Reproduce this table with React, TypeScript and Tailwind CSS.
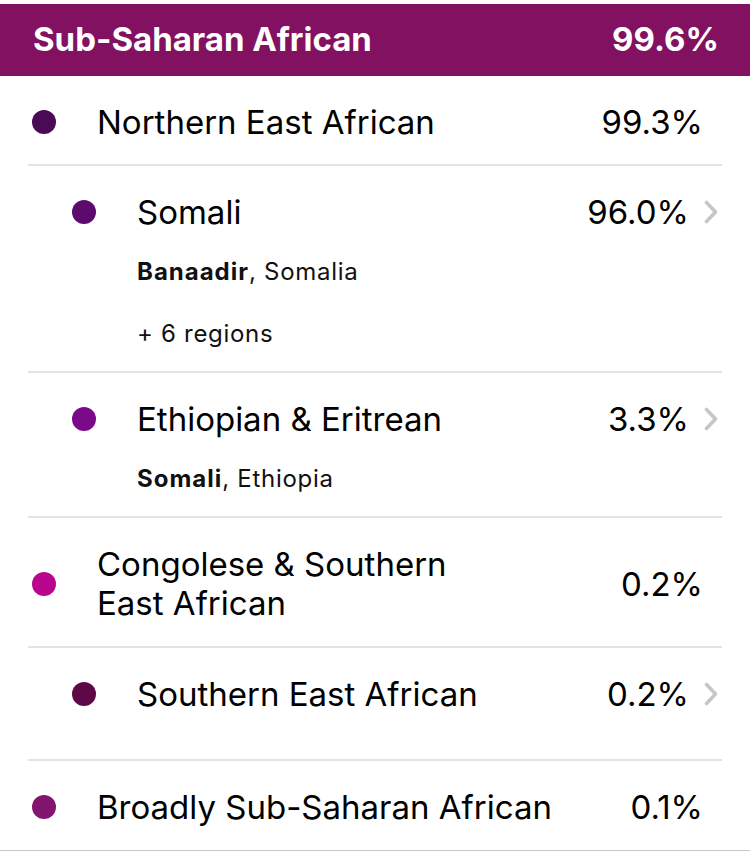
import React from "react";

const Chevron = () => (
  <svg width="16" height="24" viewBox="0 0 16 24" className="shrink-0">
    <polyline points="3.5,2.5 12.5,12 3.5,21.5" fill="none" stroke="#c6c6c8" strokeWidth="3.6" strokeLinecap="round" strokeLinejoin="round" />
  </svg>
);

type Row = {
  level: 1 | 2;
  color: string;
  title: React.ReactNode;
  pct: string;
  chevron?: boolean;
  subs?: React.ReactNode[];
  pt: string;
  pb: string;
  lh: string;
  last?: boolean;
};

const rows: Row[] = [
  { level: 1, color: "#4a0a55", title: "Northern East African", pct: "99.3%", pt: "pt-[26px]", pb: "pb-[22px]", lh: "leading-[40px]" },
  {
    level: 2, color: "#5c0a6e", title: "Somali", pct: "96.0%", chevron: true,
    subs: [
      <span key="a"><b className="font-bold tracking-[1px]">Banaadir</b>, Somalia</span>,
      <span key="b">+ 6 regions</span>,
    ],
    pt: "pt-[26px]", pb: "pb-[6px]", lh: "leading-[40px]",
  },
  {
    level: 2, color: "#7b0a8a", title: "Ethiopian & Eritrean", pct: "3.3%", chevron: true,
    subs: [<span key="a"><b className="font-bold tracking-[1px]">Somali</b>, Ethiopia</span>],
    pt: "pt-[26px]", pb: "pb-[6px]", lh: "leading-[40px]",
  },
  { level: 1, color: "#b8068f", title: <>Congolese &amp; Southern<br />East African</>, pct: "0.2%", pt: "pt-[27px]", pb: "pb-[23px]", lh: "leading-[39px]" },
  { level: 2, color: "#5e0848", title: "Southern East African", pct: "0.2%", chevron: true, pt: "pt-[26px]", pb: "pb-[45px]", lh: "leading-[40px]" },
  { level: 1, color: "#83156e", title: "Broadly Sub-Saharan African", pct: "0.1%", pt: "pt-[26px]", pb: "pb-[23px]", lh: "leading-[40px]", last: true },
];

export default function App() {
  return (
    <div className="w-[750px] h-[851px] bg-white overflow-hidden text-black" style={{ fontFamily: "Inter, 'Liberation Sans', sans-serif" }}>
      <div className="h-[4px]" />
      <div className="h-[72px] bg-[#821162] flex items-center justify-between pl-[33px] pr-[31px] text-white font-bold text-[33px]">
        <span>Sub-Saharan African</span>
        <span>99.6%</span>
      </div>
      {rows.map((r, i) => (
        <div key={i} className={r.last ? "border-b border-[#c8c8cc]" : ""}>
          <div className={`mx-[28px] ${r.pt} ${r.pb} ${r.last ? "" : "border-b-2 border-[#e3e3e5]"}`}>
            <div className="flex items-center">
              <div className={r.level === 1 ? "w-[69px] pl-[4px] shrink-0" : "w-[109px] pl-[44px] shrink-0"}>
                <div className="w-[24px] h-[24px] rounded-full" style={{ backgroundColor: r.color }} />
              </div>
              <div className={`flex-1 text-[33px] ${r.lh}`}>{r.title}</div>
              {r.chevron ? (
                <div className="flex items-center shrink-0 pr-[3px]">
                  <span className="text-[33px] leading-[40px]">{r.pct}</span>
                  <span className="ml-[14px]"><Chevron /></span>
                </div>
              ) : (
                <div className="shrink-0 pr-[19px] text-[33px] leading-[40px]">{r.pct}</div>
              )}
            </div>
            {r.subs && (
              <div className="mt-[9px] pl-[109px]">
                {r.subs.map((s, j) => (
                  <div key={j} className="h-[62px] leading-[62px] text-[24px] tracking-[0.7px] text-[#111]">{s}</div>
                ))}
              </div>
            )}
          </div>
        </div>
      ))}
    </div>
  );
}
